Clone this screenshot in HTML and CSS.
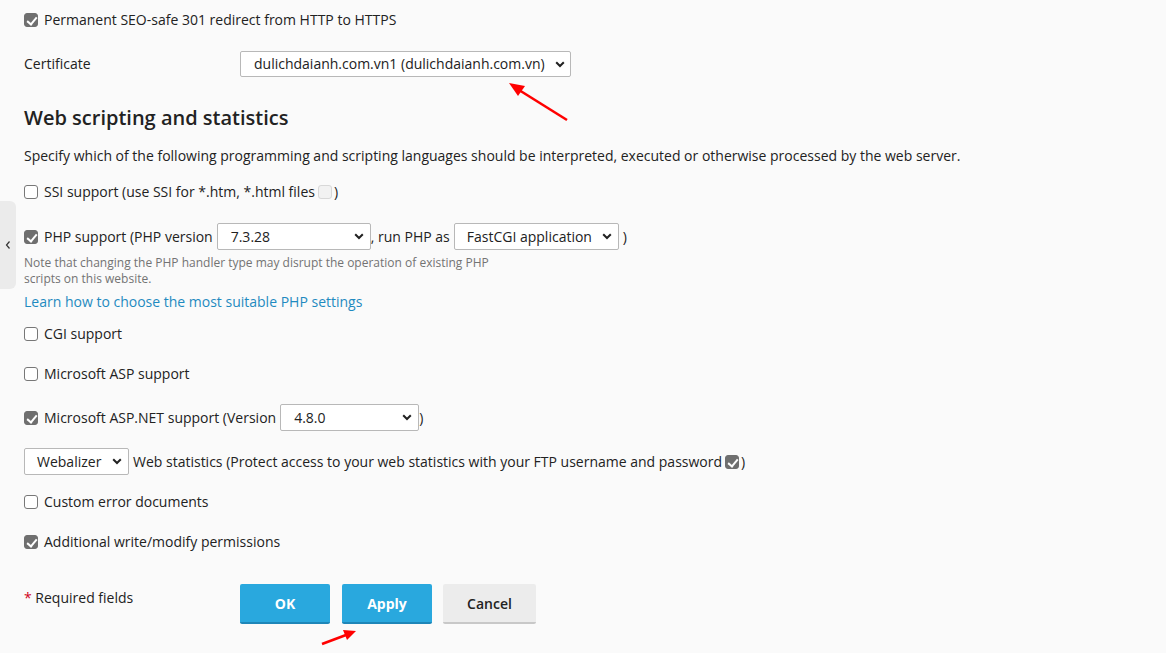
FILE: index.html
```html
<!DOCTYPE html>
<html>
<head>
<meta charset="utf-8">
<link rel="stylesheet" href="styles.css">
</head>
<body>
<div class="side-tab"><svg width="8" height="10" viewBox="0 0 8 10"><path d="M5.5 1.5 L2.5 5 L5.5 8.5" fill="none" stroke="#333" stroke-width="1.2"/></svg></div>
<main class="form">
  <div class="row r1"><span class="cb on"></span><span>Permanent SEO-safe 301 redirect from HTTP to HTTPS</span></div>
  <div class="row cert">
    <span class="label">Certificate</span>
    <div class="select sel-cert"><span>dulichdaianh.com.vn1 (dulichdaianh.com.vn)</span><svg class="chev" width="10" height="7" viewBox="0 0 10 7"><path d="M1.2 1.2 L5 5 L8.8 1.2" fill="none" stroke="#222" stroke-width="2"/></svg></div>
  </div>
  <h2 class="heading">Web scripting and statistics</h2>
  <p class="desc">Specify which of the following programming and scripting languages should be interpreted, executed or otherwise processed by the web server.</p>
  <div class="row ssi"><span class="cb"></span><span>SSI support (use SSI for *.htm, *.html files</span><span class="cb dis"></span><span>)</span></div>
  <div class="row php">
    <span class="cb on"></span><span>PHP support (PHP version</span>
    <div class="select sel-php"><span>7.3.28</span><svg class="chev" width="10" height="7" viewBox="0 0 10 7"><path d="M1.2 1.2 L5 5 L8.8 1.2" fill="none" stroke="#222" stroke-width="2"/></svg></div>
    <span class="tight">, run PHP as</span>
    <div class="select sel-fcgi"><span>FastCGI application</span><svg class="chev" width="10" height="7" viewBox="0 0 10 7"><path d="M1.2 1.2 L5 5 L8.8 1.2" fill="none" stroke="#222" stroke-width="2"/></svg></div>
    <span>)</span>
  </div>
  <p class="note">Note that changing the PHP handler type may disrupt the operation of existing PHP scripts on this website.</p>
  <a class="link" href="#">Learn how to choose the most suitable PHP settings</a>
  <div class="row cgi"><span class="cb"></span><span>CGI support</span></div>
  <div class="row asp"><span class="cb"></span><span>Microsoft ASP support</span></div>
  <div class="row aspnet">
    <span class="cb on"></span><span>Microsoft ASP.NET support (Version</span>
    <div class="select sel-net"><span>4.8.0</span><svg class="chev" width="10" height="7" viewBox="0 0 10 7"><path d="M1.2 1.2 L5 5 L8.8 1.2" fill="none" stroke="#222" stroke-width="2"/></svg></div>
    <span class="tight0">)</span>
  </div>
  <div class="row web">
    <div class="select sel-web"><span>Webalizer</span><svg class="chev" width="10" height="7" viewBox="0 0 10 7"><path d="M1.2 1.2 L5 5 L8.8 1.2" fill="none" stroke="#222" stroke-width="2"/></svg></div>
    <span>Web statistics (Protect access to your web statistics with your FTP username and password</span><span class="cb on small"></span><span>)</span>
  </div>
  <div class="row custom"><span class="cb"></span><span>Custom error documents</span></div>
  <div class="row addl"><span class="cb on"></span><span>Additional write/modify permissions</span></div>
  <div class="footer">
    <div class="req"><span class="ast">*</span> Required fields</div>
    <div class="buttons">
      <button class="btn primary ok">OK</button>
      <button class="btn primary apply">Apply</button>
      <button class="btn cancel">Cancel</button>
    </div>
  </div>
</main>
<svg class="arrows" width="1166" height="653" viewBox="0 0 1166 653">
  <line x1="567" y1="120" x2="519" y2="90" stroke="#f00" stroke-width="2.6"/>
  <polygon points="509,83 525,86 518,96" fill="#f00"/>
  <line x1="322" y1="644" x2="346" y2="635" stroke="#f00" stroke-width="2.6"/>
  <polygon points="356,631 343,630 347,640" fill="#f00"/>
</svg>
</body>
</html>
```
FILE: styles.css
```css
* { box-sizing: border-box; }
html, body { margin: 0; padding: 0; }
body {
  background: #fafafa;
  font-family: "Open Sans", "Noto Sans", sans-serif;
  font-size: 14px;
  color: #222;
  width: 1166px;
  height: 653px;
  overflow: hidden;
  position: relative;
}
.side-tab {
  position: absolute;
  left: 0;
  top: 201px;
  width: 16px;
  height: 88px;
  background: #ebebeb;
  border-radius: 0 6px 6px 0;
  display: flex;
  align-items: center;
  justify-content: center;
}
.form { padding-left: 24px; display: flex; flex-direction: column; align-items: flex-start; }
.row { display: flex; align-items: center; height: 20px; line-height: 20px; white-space: nowrap; }
.cb {
  width: 14px; height: 14px;
  border: 1px solid #777;
  border-radius: 3px;
  background: #fff;
  margin-right: 6px;
  flex: none;
  position: relative;
}
.cb.on { background: #6f6f6f; border-color: #6f6f6f; }
.cb.on::after {
  content: "";
  position: absolute;
  left: 4px; top: 1px;
  width: 4px; height: 8px;
  border: solid #fff;
  border-width: 0 2px 2px 0;
  transform: rotate(40deg);
}
.cb.dis { background: #f2f2f2; border-color: #d8d8d8; margin-left: 3px; margin-right: 2px; }
.cb.small { margin-left: 3px; margin-right: 2px; }
.r1 { margin-top: 10px; }
.cert { margin-top: 21px; height: 26px; }
.label { width: 216px; }
.select {
  height: 26px;
  background: #fff;
  border: 1px solid #b8b8b8;
  border-radius: 2px;
  display: flex;
  align-items: center;
  justify-content: space-between;
  padding: 0 6px 0 13px;
  color: #222;
  flex: none;
}
.chev { flex: none; }
.sel-cert { width: 331px; padding-right: 5px; }
.heading { margin: 28px 0 0; font-size: 20px; line-height: 26px; font-weight: 600; color: #222; }
.desc { margin: 15px 0 0; line-height: 20px; }
.ssi { margin-top: 16px; }
.php { margin-top: 21px; height: 27px; }
.php .select { height: 27px; }
.sel-php { width: 154px; margin-left: 4px; }
.tight { margin-right: 4px; }
.sel-fcgi { width: 165px; padding-left: 12px; margin-right: 4px; }
.note { margin: 5px 0 0; font-size: 12px; line-height: 16px; color: #737373; width: 480px; }
.link { margin-top: 5px; line-height: 20px; color: #1f8ac0; text-decoration: none; }
.cgi { margin-top: 12px; }
.asp { margin-top: 20px; }
.aspnet { margin-top: 20px; height: 27px; }
.sel-net { width: 139px; height: 27px; margin-left: 4px; }
.web { margin-top: 17px; height: 27px; }
.sel-web { width: 105px; height: 27px; padding-left: 12px; margin-right: 4px; }
.custom { margin-top: 17px; }
.addl { margin-top: 20px; }
.footer { margin-top: 32px; display: flex; align-items: flex-start; }
.req { width: 216px; line-height: 20px; margin-top: 4px; }
.ast { color: #d0021b; }
.buttons { display: flex; gap: 12px; }
.btn {
  font-family: "Open Sans", "Noto Sans", sans-serif;
  font-size: 14px;
  height: 40px;
  border: none;
  border-radius: 2px;
  padding: 0;
  cursor: pointer;
}
.primary { background: #29a8de; color: #fff; font-weight: 700; border-bottom: 2px solid #1e86b8; }
.ok { width: 90px; }
.apply { width: 90px; }
.cancel { width: 93px; margin-left: -1px; background: #ececec; color: #222; font-weight: 600; border-bottom: 2px solid #c8c8c8; }
.arrows { position: absolute; left: 0; top: 0; pointer-events: none; }
```
